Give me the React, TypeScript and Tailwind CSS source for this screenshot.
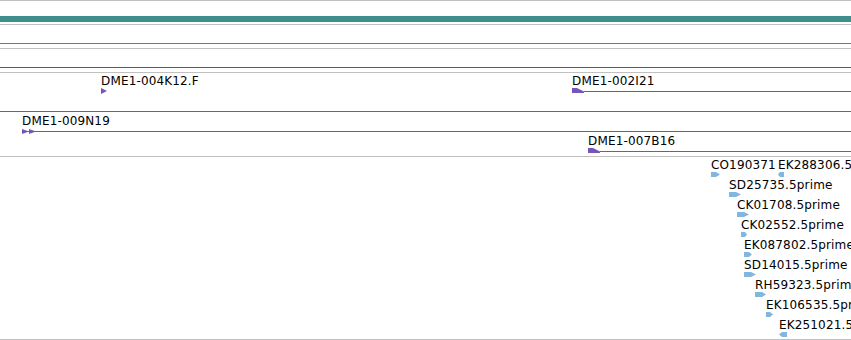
import React from 'react';

type Feature = {
  label: string;
  x: number; // label / glyph start
  row: number;
  w: number; // glyph width
  dir?: 'left' | 'right';
  lineTo?: number; // tail line end (px) when the feature runs off screen
  kind?: 'box' | 'tri' | 'double';
};

const PURPLE = '#6b5ba8';
const PURPLE_GLYPH = '#7656b9';
const EST_BLUE = '#80b6df';

const cloneFeatures: Feature[] = [
  { label: 'DME1-004K12.F', x: 101, row: 0, w: 6, kind: 'tri' },
  { label: 'DME1-002I21', x: 572, row: 0, w: 12, lineTo: 851, kind: 'box' },
  { label: '', x: 0, row: 1, w: 0, lineTo: 851 },
  { label: 'DME1-009N19', x: 22, row: 2, w: 14, lineTo: 851, kind: 'double' },
  { label: 'DME1-007B16', x: 588, row: 3, w: 12, lineTo: 851, kind: 'box' },
];

const estFeatures: Feature[] = [
  { label: 'CO190371', x: 711, row: 0, w: 9 },
  { label: 'EK288306.5prime', x: 778, row: 0, w: 6, dir: 'left' },
  { label: 'SD25735.5prime', x: 729, row: 1, w: 12 },
  { label: 'CK01708.5prime', x: 737, row: 2, w: 12 },
  { label: 'CK02552.5prime', x: 741, row: 3, w: 6 },
  { label: 'EK087802.5prime', x: 744, row: 4, w: 8 },
  { label: 'SD14015.5prime', x: 744, row: 5, w: 12 },
  { label: 'RH59323.5prime', x: 755, row: 6, w: 11 },
  { label: 'EK106535.5prime', x: 766, row: 7, w: 7 },
  { label: 'EK251021.5prime', x: 779, row: 8, w: 8, dir: 'left' },
];

function Glyph({ w, h, color, dir }: { w: number; h: number; color: string; dir?: 'left' | 'right' }) {
  const tip = Math.max(2, Math.round(w * 0.4));
  const pts =
    dir === 'left'
      ? `${w},0 ${w},${h} ${tip},${h} 0,${h / 2} ${tip},0`
      : `0,0 ${w - tip},0 ${w},${h / 2} ${w - tip},${h} 0,${h}`;
  return (
    <svg width={w} height={h} viewBox={`0 0 ${w} ${h}`} className="block">
      <polygon points={pts} fill={color} />
    </svg>
  );
}

function Label({ text, x, top }: { text: string; x: number; top: number }) {
  return (
    <span
      className="absolute whitespace-nowrap text-[12px] leading-[13px] tracking-[0.15px] text-black font-['DejaVu_Sans',sans-serif]"
      style={{ left: x, top }}
    >
      {text}
    </span>
  );
}

function CloneTrack() {
  return (
    <div className="relative h-[84px] border-b border-[#c0c0c0] overflow-hidden">
      {cloneFeatures.map((f, i) => {
        const mid = 18 + f.row * 20; // feature centre line
        return (
          <React.Fragment key={i}>
            {f.label && <Label text={f.label} x={f.x} top={2 + f.row * 20} />}
            {f.lineTo && (
              <div
                className="absolute h-px"
                style={{ left: f.x + f.w, width: f.lineTo - f.x - f.w, top: mid, background: PURPLE }}
              />
            )}
            {f.kind === 'tri' && (
              <svg className="absolute" style={{ left: f.x, top: mid - 3 }} width="6" height="6" viewBox="0 0 6 6">
                <polygon points="0,0 6,3 0,6" fill={PURPLE_GLYPH} />
              </svg>
            )}
            {f.kind === 'box' && (
              <svg className="absolute" style={{ left: f.x, top: mid - 3 }} width="12" height="5" viewBox="0 0 12 5">
                <polygon points="0,0 5,0 12,3.5 12,5 0,5" fill={PURPLE_GLYPH} />
              </svg>
            )}
            {f.kind === 'double' && (
              <svg className="absolute" style={{ left: f.x, top: mid - 2 }} width="14" height="5" viewBox="0 0 14 5">
                <polygon points="0,0 7,2.5 0,5" fill={PURPLE_GLYPH} />
                <polygon points="7,0 14,2.5 7,5" fill={PURPLE_GLYPH} />
                <rect x="0" y="2" width="14" height="1" fill={PURPLE} />
              </svg>
            )}
          </React.Fragment>
        );
      })}
    </div>
  );
}

function EstTrack() {
  return (
    <div className="relative flex-1 border-b border-[#c0c0c0] overflow-hidden">
      {estFeatures.map((f, i) => (
        <React.Fragment key={i}>
          <Label text={f.label} x={f.x} top={2 + f.row * 20} />
          <div className="absolute" style={{ left: f.x, top: 15 + f.row * 20 }}>
            <Glyph w={f.w} h={5} color={EST_BLUE} dir={f.dir} />
          </div>
        </React.Fragment>
      ))}
    </div>
  );
}

export default function App() {
  return (
    <div className="w-[851px] h-[340px] bg-white overflow-hidden flex flex-col">
      {/* reference sequence */}
      <div className="h-[25px] border-t border-b border-[#c0c0c0] pt-[15px]">
        <div className="h-[6px] bg-[#3e8e8e]" />
      </div>
      {/* gene models */}
      <div className="h-[24px] border-b border-[#c0c0c0] pt-[18px]">
        <div className="h-px bg-[#2b94aa]" />
      </div>
      <div className="h-[24px] border-b border-[#c0c0c0] pt-[18px]">
        <div className="h-px bg-[#3a5ea8]" />
      </div>
      <CloneTrack />
      <EstTrack />
    </div>
  );
}
